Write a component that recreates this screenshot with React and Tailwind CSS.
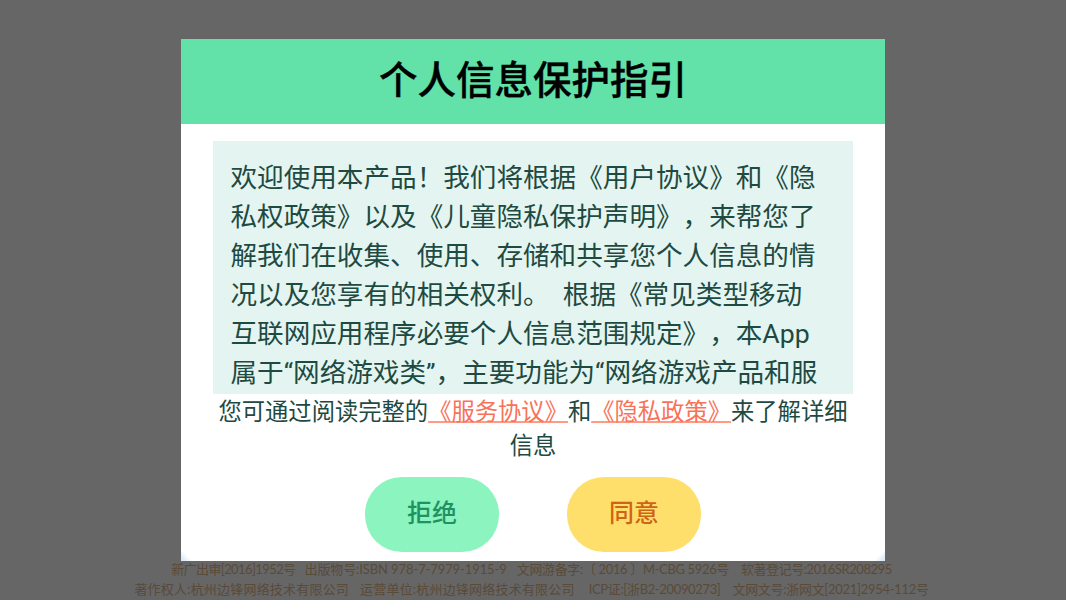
const lines = [
  '欢迎使用本产品！我们将根据《用户协议》和《隐',
  '私权政策》以及《儿童隐私保护声明》，来帮您了',
  '解我们在收集、使用、存储和共享您个人信息的情',
  '况以及您享有的相关权利。\u00a0\u00a0根据《常见类型移动',
  '互联网应用程序必要个人信息范围规定》，本App',
  '属于“网络游戏类”，主要功能为“网络游戏产品和服',
];

export default function App() {
  return (
    <div className="flex h-[600px] w-[1066px] flex-col items-center overflow-hidden bg-[#666666] pt-[39px] font-['Roboto','Noto_Sans_CJK_SC',sans-serif] [text-spacing-trim:space-all]">
      <div className="relative flex h-[522px] w-[704px] flex-col items-center overflow-hidden bg-white">
        <div className="flex h-[85px] w-full items-center justify-center bg-[#62e2a9] pb-[1px] text-[38.5px] font-medium text-black [-webkit-text-stroke:0.4px_#000]">
          个人信息保护指引
        </div>
        <div className="mt-[17px] h-[253px] w-[640px] overflow-hidden bg-[#e4f5f1] pt-[17px] pl-[17.5px] text-[26.6px] leading-[39px] whitespace-nowrap text-[#1e4a42]">
          {lines.map((line) => (
            <div key={line}>{line}</div>
          ))}
        </div>
        <div className="w-[640px] pt-[1px] text-center text-[23.3px] leading-[34px] text-[#1e4a42]">
          您可通过阅读完整的
          <span className="text-[#f97258] underline decoration-[#ff9a85] decoration-2 underline-offset-[1px] [text-decoration-skip-ink:none]">《服务协议》</span>
          和
          <span className="text-[#f97258] underline decoration-[#ff9a85] decoration-2 underline-offset-[1px] [text-decoration-skip-ink:none]">《隐私政策》</span>
          来了解详细
          <br />
          信息
        </div>
        <div className="mt-[14px] flex gap-[68px]">
          <button className="h-[75px] w-[134px] rounded-[37px] bg-[#8cf4bf] pb-[2px] text-[25px] font-medium text-[#1f9163]">
            拒绝
          </button>
          <button className="h-[75px] w-[134px] rounded-[37px] bg-[#ffdf6b] pb-[2px] text-[25px] font-medium text-[#cf6317]">
            同意
          </button>
        </div>
        <div className="absolute bottom-0 left-0 h-[12px] w-[12px] bg-[linear-gradient(45deg,#dcecf8_15%,#ffffff_50%)]" />
        <div className="absolute right-0 bottom-0 h-[12px] w-[12px] bg-[linear-gradient(-45deg,#dcecf8_15%,#ffffff_50%)]" />
      </div>
      <div className="-mt-[1px] flex flex-col items-center pr-[3px] font-['Lato','Noto_Sans_CJK_SC',sans-serif] text-[13px] leading-[19.5px] whitespace-nowrap text-[#5a4a38]">
        <div className="flex">
          <span className="mr-[9px] tracking-[-0.6px]">新广出审[2016]1952号</span>
          <span className="mr-[10px] tracking-[-0.1px]">出版物号:ISBN 978-7-7979-1915-9</span>
          <span className="mr-[12px] tracking-[-0.35px]">文网游备字:〔 2016 〕M-CBG 5926号</span>
          <span className="tracking-[-0.45px]">软著登记号:2016SR208295</span>
        </div>
        <div className="flex">
          <span className="mr-[11px] tracking-[0.2px]">著作权人:杭州边锋网络技术有限公司</span>
          <span className="mr-[14px] tracking-[0.2px]">运营单位:杭州边锋网络技术有限公司</span>
          <span className="mr-[12px] tracking-[-0.35px]">ICP证:[浙B2-20090273]</span>
          <span className="tracking-[-0.3px]">文网文号:浙网文[2021]2954-112号</span>
        </div>
      </div>
    </div>
  );
}
